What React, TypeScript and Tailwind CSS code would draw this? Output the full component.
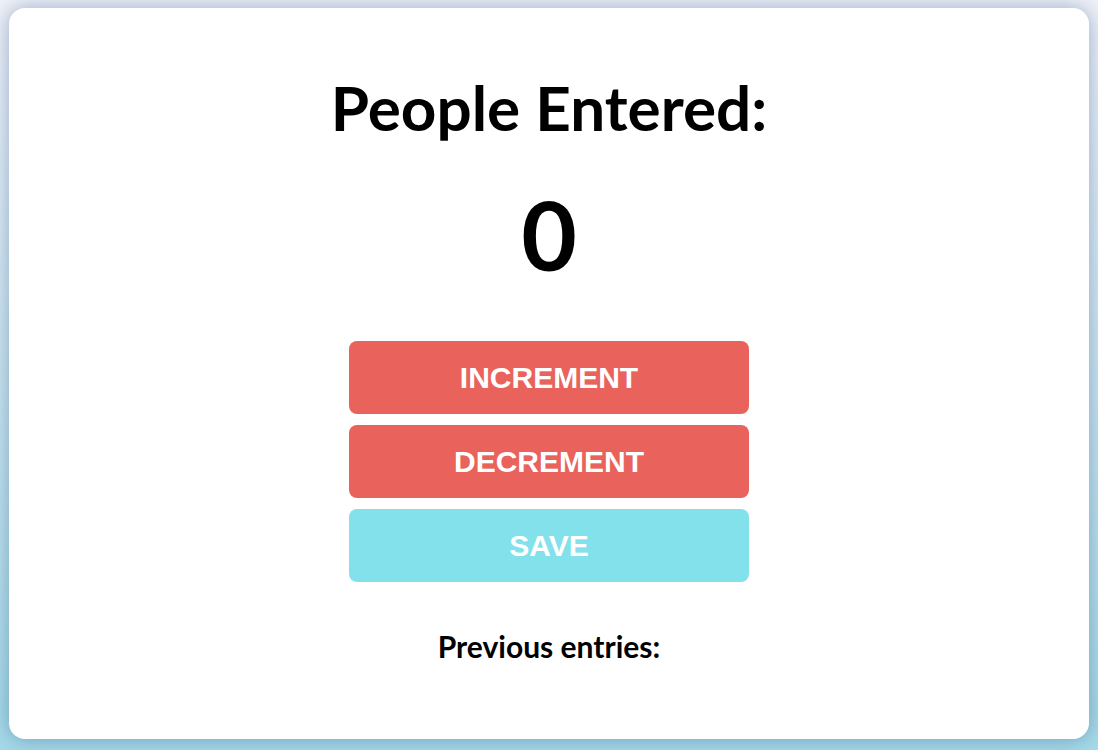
export default function App() {
  return (
    <div className="h-[750px] w-full bg-gradient-to-b from-[#f2f3f9] to-[#a6dbe8] pt-2 px-[9px] overflow-hidden">
      <div className="h-[731px] rounded-2xl bg-white shadow-[0_0_22px_rgba(30,70,130,0.42)] flex flex-col items-center pt-[68px]">
        <h1
          className="text-[62px] font-bold leading-none text-black"
          style={{ fontFamily: 'Lato, "Noto Sans", sans-serif' }}
        >
          People Entered:
        </h1>
        <div
          className="mt-[48px] text-[96px] font-bold leading-none text-black"
          style={{ fontFamily: 'Lato, "Noto Sans", sans-serif' }}
        >
          0
        </div>
        <div className="mt-[59px] flex flex-col gap-[11px] w-[400px]">
          <button className="h-[73px] rounded-lg bg-[#e9635c] text-white text-[30px] font-bold font-['Liberation_Sans',Arial,sans-serif]">
            INCREMENT
          </button>
          <button className="h-[73px] rounded-lg bg-[#e9635c] text-white text-[30px] font-bold font-['Liberation_Sans',Arial,sans-serif]">
            DECREMENT
          </button>
          <button className="h-[73px] rounded-lg bg-[#83e1eb] text-white text-[30px] font-bold font-['Liberation_Sans',Arial,sans-serif]">
            SAVE
          </button>
        </div>
        <p
          className="mt-[49px] text-[30px] font-bold leading-none text-black"
          style={{ fontFamily: 'Lato, "Noto Sans", sans-serif' }}
        >
          Previous entries:
        </p>
      </div>
    </div>
  );
}
